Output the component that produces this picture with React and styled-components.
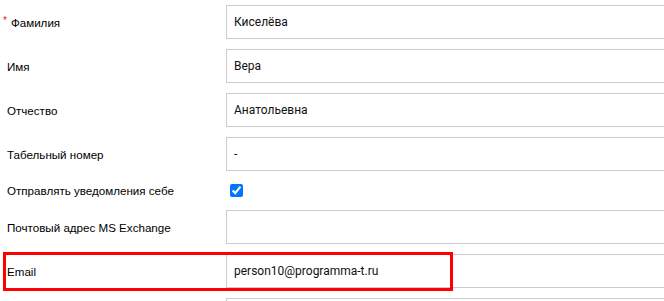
import React from 'react'
import styled, {createGlobalStyle} from 'styled-components'

const GlobalStyle = createGlobalStyle`
    html, body {
        margin:0;
        padding:0;
        background:#fff;
        overflow:hidden;
    }
`

const Form = styled.div`
    display:grid;
    grid-template-columns:226px 480px;
    row-gap:10px;
    padding-top:5px;
`

const Row = styled.div`
    display:contents;
`

const Label = styled.div`
    display:flex;
    align-items:center;
    padding-left:${p => p.required ? '3px' : '7px'};
    font-family:"Liberation Sans", Arial, sans-serif;
    font-size:11.6px;
    color:#000;
    position:relative;
    z-index:1;
`

const Star = styled.span`
    color:#e0262b;
    font-size:10px;
    margin-right:4px;
    position:relative;
    top:-2px;
`

const Field = styled.div`
    height:34px;
    box-sizing:border-box;
    border:1px solid #cccccc;
    padding:0 7px;
    display:flex;
    align-items:center;
    font-family:Roboto, "Liberation Sans", sans-serif;
    font-size:12px;
    color:#111;
`

const CheckCell = styled.div`
    display:flex;
    align-items:center;

    input {
        margin:3px 3px 3px 4px;
        width:13px;
        height:13px;
        accent-color:#0075ff;
    }
`

const Highlight = styled.div`
    position:absolute;
    left:3px;
    top:-2px;
    width:450px;
    height:39px;
    border:3px solid #ff0000;
    box-sizing:border-box;
    pointer-events:none;
`

const fields = [
    {label:'Фамилия', value:'Киселёва', required:true},
    {label:'Имя', value:'Вера'},
    {label:'Отчество', value:'Анатольевна'},
    {label:'Табельный номер', value:'-'},
]

export default function App() {
    return (
        <>
            <GlobalStyle />
            <Form>
                {fields.map(f => (
                    <Row key={f.label}>
                        <Label required={f.required}>
                            {f.required ? <Star>*</Star> : null}
                            {f.label}
                        </Label>
                        <Field>{f.value}</Field>
                    </Row>
                ))}
                <Row>
                    <Label>Отправлять уведомления себе</Label>
                    <CheckCell>
                        <input type='checkbox' defaultChecked readOnly />
                    </CheckCell>
                </Row>
                <Row>
                    <Label>Почтовый адрес MS Exchange</Label>
                    <Field />
                </Row>
                <Row>
                    <Label>
                        Email
                        <Highlight />
                    </Label>
                    <Field>person10@programma-t.ru</Field>
                </Row>
                <Row>
                    <Label />
                    <Field />
                </Row>
            </Form>
        </>
    )
}
